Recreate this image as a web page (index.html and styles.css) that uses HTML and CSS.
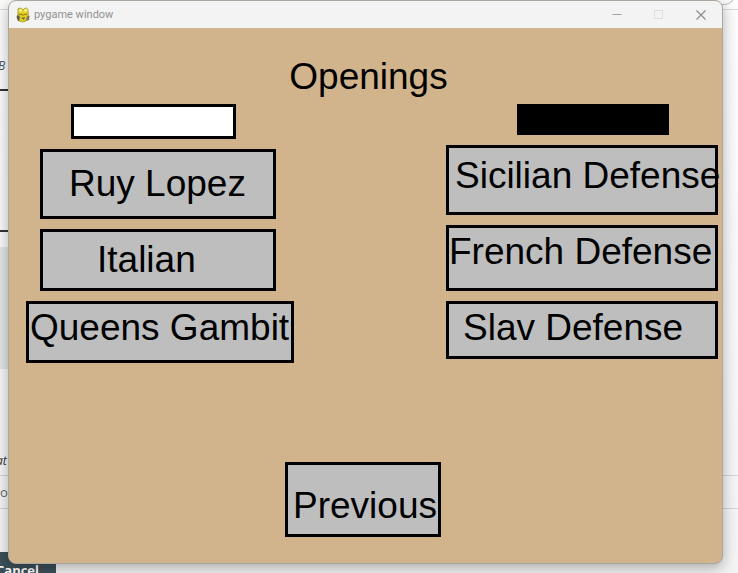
FILE: index.html
```html
<!DOCTYPE html>
<html lang="en">
<head>
  <meta charset="UTF-8">
  <meta name="viewport" content="width=device-width, initial-scale=1.0">
  <title>pygame window</title>
  <link rel="stylesheet" href="styles.css">
</head>
<body>
  <!-- page behind the window -->
  <div class="backdrop">
    <div class="toolbar"><span class="pill"></span></div>
    <div class="code">B</div>
    <div class="dashes"></div>
    <div class="dashes second"></div>
    <div class="block"></div>
    <div class="note">at</div>
    <div class="field">o</div>
    <button class="cancel" type="button">Cancel</button>
  </div>

  <main class="window">
    <header class="titlebar">
      <svg class="logo" width="14" height="16" viewBox="0 0 14 16">
        <path d="M2 7 L0.500 10 L2 14 L5 14 L4 9 Z" fill="#5d5a48"/>
        <path d="M11 8 L13.500 9 L13 13 L10 14 Z" fill="#77705a"/>
        <path d="M2 4 Q1 1 4 1 Q6 1 7 3 Q8 1 10.500 1 Q13 2 12 5 Q13.500 8 11 10 L10 14 Q7 16 3 14 L4 10 Q1 8 2 4 Z" fill="#e3cf24" stroke="#9c8e22" stroke-width="0.700"/>
        <circle cx="4.500" cy="3.500" r="1.700" fill="#f3ed83"/>
        <circle cx="9.800" cy="3.500" r="1.700" fill="#f3ed83"/>
        <path d="M3 7 Q7 9 11 7" fill="none" stroke="#81751d"/>
        <path d="M5 11 L9 10 L8 13 Z" fill="#716a44"/>
      </svg>
      <span class="title">pygame window</span>
      <button class="control" type="button" aria-label="Minimize">
        <svg width="10" height="10" viewBox="0 0 10 10"><path d="M0.500 4.500 H9.500" stroke="#a0a0a0"/></svg>
      </button>
      <button class="control" type="button" aria-label="Maximize" disabled>
        <svg width="10" height="10" viewBox="0 0 10 10"><rect x="0.500" y="0.500" width="8" height="8" fill="none" stroke="#dedede"/></svg>
      </button>
      <button class="control" type="button" aria-label="Close">
        <svg width="10" height="10" viewBox="0 0 10 10"><path d="M0.500 0.500 L9.500 9.500 M9.500 0.500 L0.500 9.500" stroke="#8c8c8c" stroke-width="1.200"/></svg>
      </button>
    </header>

    <div class="board">
      <h1>Openings</h1>
      <div class="columns">
        <section class="white">
          <div class="side"></div>
          <button class="opening ruy" type="button">Ruy Lopez</button>
          <button class="opening italian" type="button">Italian</button>
          <button class="opening queens" type="button">Queens Gambit</button>
        </section>
        <section class="black">
          <div class="side"></div>
          <button class="opening sicilian" type="button">Sicilian Defense</button>
          <button class="opening french" type="button">French Defense</button>
          <button class="opening slav" type="button">Slav Defense</button>
        </section>
      </div>
      <footer>
        <button class="opening previous" type="button">Previous</button>
      </footer>
    </div>
  </main>
</body>
</html>
```

FILE: styles.css
```css
* {
  box-sizing: border-box;
}
html,
body {
  height: 100%;
}
body {
  margin: 0;
  overflow: hidden;
  display: flex;
  padding: 0 15px 9px 8px;
  background: #f3f3f3;
  font-family: "Open Sans", sans-serif;
}

/* page behind */
.backdrop {
  position: absolute;
  inset: 0;
  overflow: hidden;
  background: linear-gradient(#fcfcfc, #f3f3f3);
}
.toolbar {
  display: flex;
  justify-content: flex-end;
  height: 10px;
  border-bottom: 1px solid #d8d8d8;
}
.pill {
  width: 40px;
  height: 24px;
  margin: -19px 2px 0 0;
  border: 1px solid #b8b8b8;
  border-radius: 12px;
}
.code {
  height: 20px;
  margin: 46px 0 0 -2px;
  font-size: 12px;
  line-height: 20px;
  font-style: italic;
  color: #4a5263;
}
.dashes {
  width: 10px;
  margin-top: 13px;
  border-top: 2px dashed #333;
}
.dashes.second {
  margin-top: 139px;
}
.block {
  width: 100px;
  height: 122px;
  margin-top: 15px;
  background: #e2e5e5;
}
.note {
  height: 20px;
  margin: 82px 0 0 -4px;
  font-size: 12px;
  line-height: 20px;
  font-style: italic;
  color: #333;
}
.field {
  height: 34px;
  margin-top: 4px;
  border: solid #d5d5d5;
  border-width: 1px 0;
  font-size: 13px;
  line-height: 32px;
  color: #666;
}
.cancel {
  display: block;
  width: 66px;
  height: 36px;
  margin: 43px 0 0 -10px;
  padding: 0 6px;
  border: 0;
  background: #3b5058;
  color: #fff;
  font: bold 13px/36px "Open Sans", sans-serif;
  text-align: left;
}

/* window */
.window {
  position: relative;
  flex: 1;
  display: flex;
  flex-direction: column;
  overflow: hidden;
  border: 1px solid #aba69f;
  border-radius: 8px;
  background: #d2b48c;
  box-shadow: 0 4px 14px rgba(0, 0, 0, 0.3);
}
.titlebar {
  display: flex;
  align-items: center;
  height: 27px;
  padding-left: 7px;
  background: #f3f3f3;
}
.title {
  flex: 1;
  margin-left: 4px;
  font-family: Roboto, sans-serif;
  font-size: 11px;
  color: #929292;
}
.control {
  display: flex;
  align-items: center;
  justify-content: center;
  width: 42px;
  height: 100%;
  padding: 0;
  border: 0;
  background: none;
}
.board {
  flex: 1;
  padding: 27px 4px 0 17px;
  font-family: "Liberation Sans", Arial, sans-serif;
  font-size: 37px;
  line-height: 44px;
  color: #000;
}
h1 {
  margin: 0;
  padding-right: 7px;
  font-size: 37px;
  font-weight: normal;
  text-align: center;
}
h1,
.opening {
  white-space: nowrap;
}
.columns {
  display: grid;
  grid-template-columns: 268fr 152fr 272fr;
  margin-top: 5px;
}
.white,
.black {
  display: flex;
  flex-direction: column;
  align-items: flex-start;
  gap: 10px;
  min-width: 0;
}
.black {
  grid-column: 3;
}
.side {
  border: 3px solid #000;
}
.white .side {
  width: 165px;
  height: 35px;
  margin-left: 45px;
  background: #fff;
}
.black .side {
  width: 152px;
  height: 31px;
  margin-left: 71px;
  background: #000;
}
.opening {
  display: block;
  width: 100%;
  border: 3px solid #000;
  border-radius: 0;
  background: #bebebe;
  color: #000;
  font: inherit;
  text-align: left;
}
.ruy,
.italian {
  width: 88%;
  margin-left: 14px;
}
.ruy {
  padding: 10px 0 10px 26px;
}
.italian {
  padding: 6px 0 6px 54px;
}
.queens {
  padding: 2px 0 10px 1px;
}
.sicilian {
  padding: 6px 0 14px 6px;
}
.french {
  padding: 2px 0 14px 0;
}
.slav {
  padding: 2px 0 6px 14px;
}
footer {
  display: flex;
  justify-content: center;
  margin-top: 99px;
  padding-right: 18px;
}
.previous {
  width: 156px;
  padding: 19px 0 6px 5px;
}
```
